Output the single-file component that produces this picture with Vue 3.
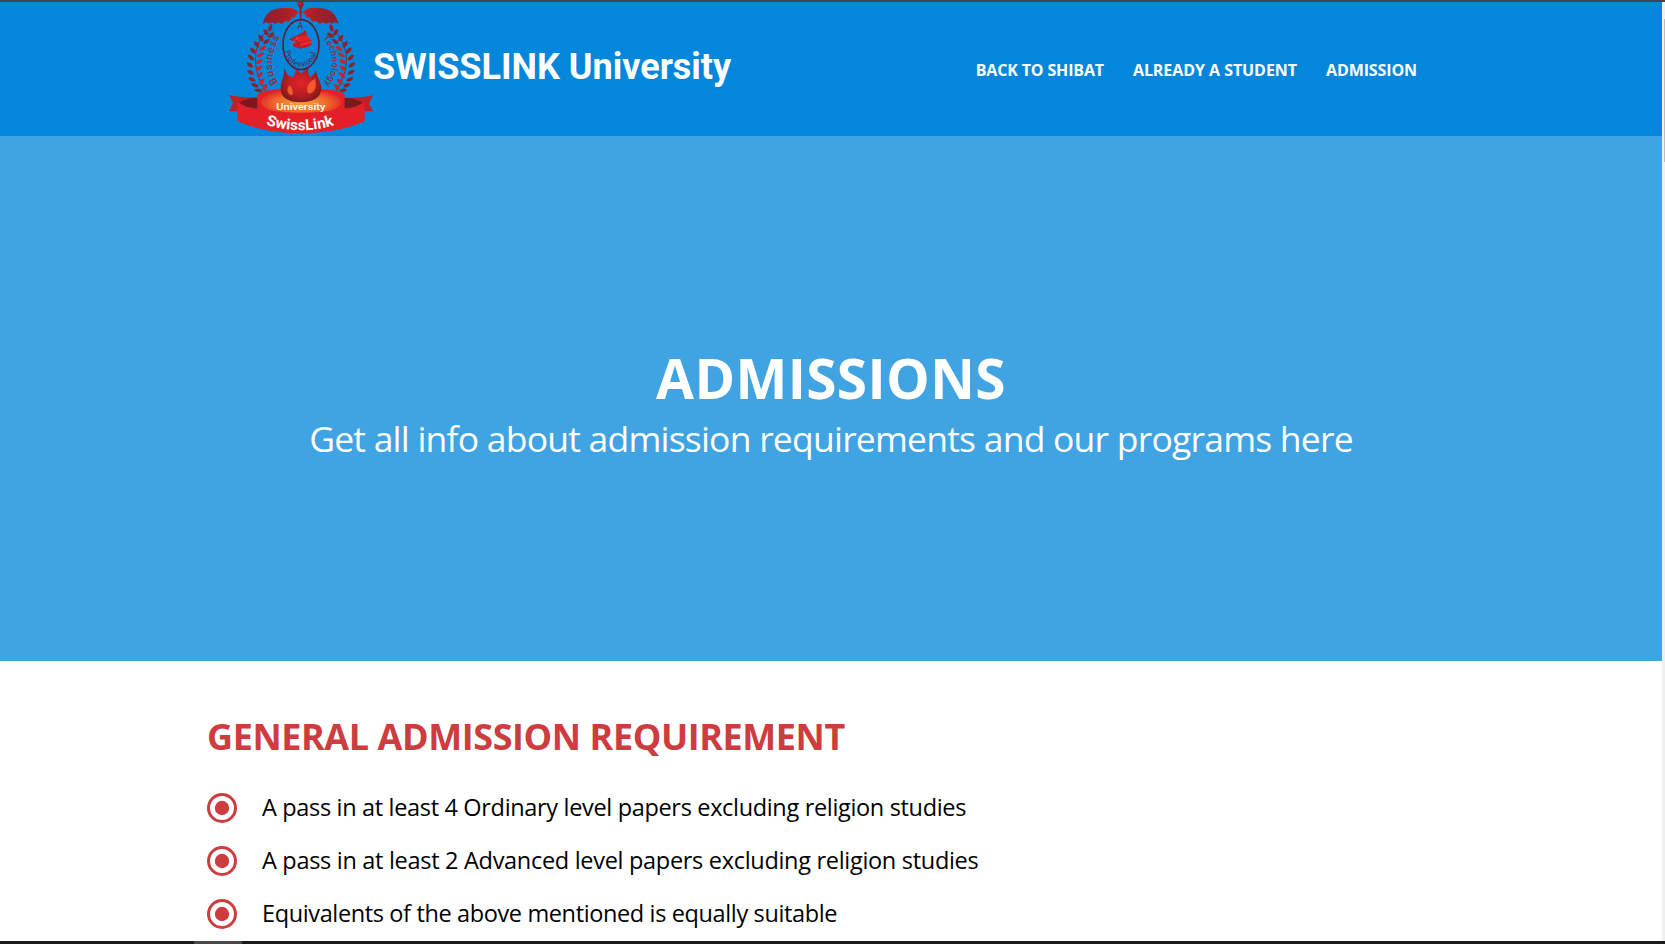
<script setup>
const links = [
  { text: 'BACK TO SHIBAT', cls: 'back' },
  { text: 'ALREADY A STUDENT', cls: 'student' },
  { text: 'ADMISSION', cls: 'admission' },
]
const requirements = [
  { text: 'A pass in at least 4 Ordinary level papers excluding religion studies', cls: 'ordinary' },
  { text: 'A pass in at least 2 Advanced level papers excluding religion studies', cls: 'advanced' },
  { text: 'Equivalents of the above mentioned is equally suitable', cls: 'equivalent' },
]
// Laurel leaves of the left branch: x, y, rotation
const leaves = [
  [151, 84, 15], [138, 98, -35], [153, 106, 50], [123, 115, -35], [139, 125, 55],
  [110, 133, -38], [128, 145, 58], [99, 152, -42], [121, 165, 60],
  [93, 173, -48], [117, 185, 58], [90, 195, -54], [116, 205, 54],
  [92, 217, -60], [119, 225, 50], [96, 238, -65],
  [125, 245, 42], [105, 256, -70], [134, 262, 35], [116, 271, -78],
]
</script>

<template>
  <div class="page">
    <div class="top-edge"></div>
    <div class="viewport">
      <main>
        <header>
          <div class="brand">
            <svg class="logo" viewBox="27 6 432 402">
              <defs>
                <radialGradient id="flame" cx=".5" cy=".45" r=".6">
                  <stop offset="0" stop-color="#e52425" /><stop offset=".6" stop-color="#b51d23" /><stop offset="1" stop-color="#74191d" />
                </radialGradient>
                <radialGradient id="base" cx=".5" cy=".55" r=".55">
                  <stop offset="0" stop-color="#f6a13a" /><stop offset=".6" stop-color="#ee6a2b" /><stop offset="1" stop-color="#e22228" />
                </radialGradient>
                <linearGradient id="wing" x1="0" x2="1">
                  <stop offset="0" stop-color="#8b2130" /><stop offset=".5" stop-color="#a51e28" /><stop offset="1" stop-color="#c92128" />
                </linearGradient>
                <path id="arcBottom" d="M196 153 C202 216 285 216 291 149" />
                <path id="arcLeft" d="M176 246 C146 220 153 155 182 106" />
                <path id="arcRight" d="M307 115 C344 150 345 213 314 252" />
                <path id="arcName" d="M137 374 Q242 408 350 373" />
                <g id="branch">
                  <path d="M152 82 C108 118 82 190 139 276" fill="none" stroke="#8c212c" stroke-width="3" />
                  <path v-for="(leaf, i) in leaves" :key="i" d="M0 12 C-8 4 -7 -5 0 -13 C7 -5 8 4 0 12Z" :fill="i > 4 && i % 2 === 0 ? '#c92229' : '#8c212c'" :transform="`translate(${leaf[0]} ${leaf[1]}) rotate(${leaf[2]})`" />
                </g>
                <g id="wingShape">
                  <path d="M237 39 C224 22 202 22 181 25 C149 27 136 44 128 71 L142 66 L145 71 L159 67 L163 72 L177 67 L184 72 L197 63 L207 65 L215 53 L225 52 L229 43Z" fill="url(#wing)" />
                  <path d="M137 53 Q172 25 226 36 M134 62 Q172 34 220 45 M157 65 Q180 45 211 50" fill="none" stroke="#6a2433" stroke-width="1.5" stroke-dasharray="5 3" />
                </g>
              </defs>
              <use href="#branch" />
              <use href="#branch" transform="translate(485 0) scale(-1 1)" />
              <use href="#wingShape" />
              <use href="#wingShape" transform="translate(484 0) scale(-1 1)" />
              <path d="M238 20 h8 l-2 40 h-4z" fill="#9d1f2b" />
              <circle cx="242" cy="13" r="9" fill="#981c28" /><circle cx="240" cy="11" r="4" fill="#c2262b" />
              <ellipse cx="243" cy="134" rx="54" ry="75" fill="none" stroke="#5b2038" stroke-width="5" />
              <text x="241" y="88" text-anchor="middle" class="ring-text letter-a">A</text>
              <path d="M206 118 L244 100 L256 90 L264 113 L235 130Z" fill="#b31e26" />
              <path d="M223 112 L260 105 L277 124 L239 132Z" fill="#e12328" />
              <path d="M217 130 L274 120 V137 L242 146 L219 139Z" fill="#b71f27" />
              <path d="M240 131 L274 121 V130 L242 139Z" fill="#e92a2b" />
              <path d="M234 111 L222 124 L216 138" fill="none" stroke="#da6b55" stroke-width="2" />
              <text class="ring-text professional"><textPath href="#arcBottom">Professional</textPath></text>
              <text class="side-text business"><textPath href="#arcLeft">Business</textPath></text>
              <text class="side-text technology"><textPath href="#arcRight">Technology</textPath></text>
              <path d="M27 284 Q69 296 145 290 V334 H27 L39 309Z M459 286 Q417 297 341 291 V334 H459 L447 311Z" fill="#bd2027" />
              <path d="M65 303 Q90 292 119 294 V325 L52 318Z M421 304 Q398 292 367 294 V325 L434 318Z" fill="#7a191d" />
              <path d="M112 286 C121 257 365 257 374 286 V347 H112Z" fill="#e22027" />
              <ellipse cx="243" cy="306" rx="121" ry="40" fill="url(#base)" />
              <path d="M193 204 C199 223 207 231 219 231 C223 224 229 217 226 207 C237 212 239 216 244 221 C253 211 258 210 266 205 C262 216 265 225 271 230 C282 224 287 218 288 206 C288 230 304 245 304 265 C304 292 279 307 243 307 C205 307 181 293 182 264 C183 242 194 233 193 204Z" fill="url(#flame)" />
              <path d="M210 256 C196 266 203 283 214 286 C223 284 218 265 210 256Z M285 236 C272 244 260 253 261 270 C262 285 277 283 283 270 C290 259 287 246 285 236Z" fill="#ee5b2d" />
              <path d="M52 307 Q96 333 166 340 H319 Q390 332 434 307 V364 Q353 400 243 400 Q130 400 52 363Z" fill="#e32028" />
              <path d="M112 325 Q243 352 374 325 V337 Q243 354 112 337Z" fill="#e32028" />
              <text x="169" y="329" textLength="147" lengthAdjust="spacingAndGlyphs" class="university">University</text>
              <text class="swisslink"><textPath href="#arcName" textLength="209" lengthAdjust="spacingAndGlyphs">SwissLink</textPath></text>
            </svg>
            <span class="brand-name">SWISSLINK University</span>
          </div>
          <nav>
            <a v-for="link in links" :key="link.text" :class="link.cls">{{ link.text }}</a>
          </nav>
        </header>
        <section class="hero">
          <h1>ADMISSIONS</h1>
          <p>Get all info about admission requirements and our programs here</p>
        </section>
        <section class="requirements">
          <h2>GENERAL ADMISSION REQUIREMENT</h2>
          <ul>
            <li v-for="item in requirements" :key="item.text">
              <svg class="bullet" viewBox="0 0 30 30">
                <circle cx="15" cy="15" r="13.5" fill="none" stroke="#cd3d3f" stroke-width="3" />
                <circle cx="15" cy="15" r="7.2" fill="#cd3d3f" />
              </svg>
              <span :class="item.cls">{{ item.text }}</span>
            </li>
          </ul>
        </section>
      </main>
      <aside class="scrollbar"><div class="thumb"></div></aside>
    </div>
    <footer class="taskbar"><div class="active-task"></div></footer>
  </div>
</template>

<style>
body { margin: 0; overflow: hidden; }
</style>

<style scoped>
.page { width: 1665px; height: 944px; display: flex; flex-direction: column; overflow: hidden; background: #fff; font-family: "Open Sans", sans-serif; }
.top-edge { height: 2px; flex: none; background: #454548; }
.viewport { flex: 1; min-height: 0; display: flex; }
main { width: 1662px; overflow: hidden; }
header { height: 134px; background: #0487db; display: flex; justify-content: space-between; box-sizing: border-box; padding: 0 245px 0 229px; color: #fff; }
.brand { display: flex; }
.logo { width: 144px; height: 134px; overflow: visible; flex: none; }
.brand-name { font: 700 36px/42px Roboto, sans-serif; margin-top: 44px; white-space: nowrap; }
nav { display: flex; gap: 29px; margin-top: 56px; font-weight: 700; font-size: 16px; line-height: 24px; white-space: nowrap; }
.back { letter-spacing: -.15px; }
.student { letter-spacing: -.06px; }
.admission { letter-spacing: -.1px; }
.ring-text { font: 21px Roboto, sans-serif; fill: #5b2040; }
.professional { font-size: 22px; letter-spacing: 1.6px; }
.letter-a { font-size: 26px; }
.side-text { font: 500 32px Roboto, sans-serif; fill: #9a2a3c; letter-spacing: 2px; }
.side-text.technology { font-size: 28px; letter-spacing: .6px; }
.university { font: 500 29px Roboto, sans-serif; fill: #fff; }
.swisslink { font: 700 45px Roboto, sans-serif; fill: #fff; }
.hero { height: 525px; background: #40a3e2; color: #fff; box-sizing: border-box; padding-top: 204px; text-align: center; }
h1, h2, p, ul { margin: 0; padding: 0; }
h1 { font-size: 55px; line-height: 76px; font-weight: 700; letter-spacing: .35px; }
p { font-size: 35.5px; line-height: 44px; letter-spacing: -.78px; white-space: nowrap; }
.requirements { padding: 50px 0 0 207px; }
h2 { font-size: 36px; line-height: 52px; font-weight: 700; letter-spacing: -.42px; color: #cd3d3f; white-space: nowrap; }
ul { list-style: none; margin-top: 30px; display: flex; flex-direction: column; gap: 23px; }
li { display: flex; align-items: center; gap: 25px; height: 30px; font-size: 23.5px; color: #000; white-space: nowrap; }
li span { padding-bottom: 2px; }
.ordinary { letter-spacing: -.33px; }
.advanced { letter-spacing: -.3px; }
.equivalent { letter-spacing: -.37px; }
.bullet { width: 30px; height: 30px; flex: none; }
.scrollbar { width: 3px; background: #f0f0f0; padding-top: 17px; box-sizing: border-box; }
.thumb { width: 1px; height: 143px; margin-left: 2px; background: #bcbcbc; }
.taskbar { height: 3px; flex: none; background: #1b1b1d; padding-left: 194px; }
.active-task { width: 48px; height: 3px; background: #4a4a4b; }
</style>
